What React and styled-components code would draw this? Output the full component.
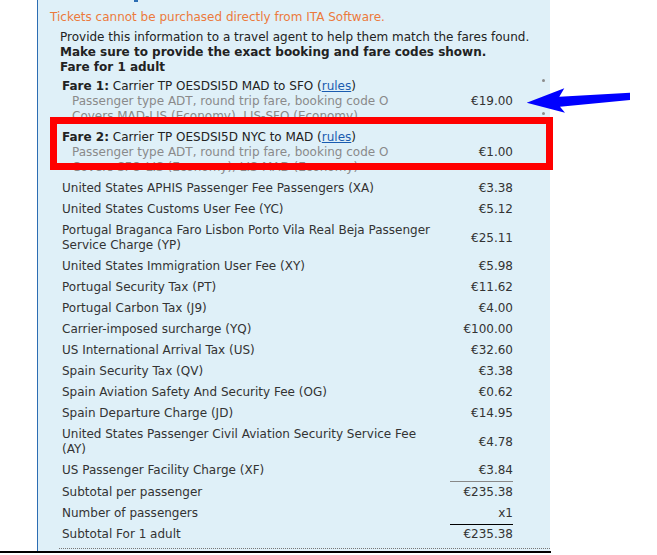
import React from "react";
import styled, { createGlobalStyle } from "styled-components";

const Global = createGlobalStyle`
  html, body { margin: 0; padding: 0; background: #fff; }
  body { font-family: "DejaVu Sans", Verdana, sans-serif; font-size: 12px; color: #333; }
`;

const Page = styled.div`
  position: relative;
  width: 657px;
  height: 555px;
  overflow: hidden;
  display: grid;
  grid-template-rows: 551px 2px 2px;
`;

const Panel = styled.div`
  margin-left: 37px;
  width: 513px;
  min-height: 0;
  box-sizing: border-box;
  background: #dff0f8;
  border-left: 1px solid #2c6db3;
  display: flex;
  flex-direction: column;
  overflow: hidden;
`;

const TopStrip = styled.div`
  height: 2px;
  flex: none;
  padding-left: 96px;
  display: flex;
`;

const Descender = styled.span`
  width: 4px;
  height: 2px;
  background: #2c6db3;
`;

const Warning = styled.div`
  margin-top: 8px;
  padding-left: 12px;
  line-height: 15px;
  color: #ec7a3c;
`;

const Info = styled.div`
  margin-top: 5px;
  padding-left: 22px;
  line-height: 15px;
  color: #222;
  white-space: nowrap;
`;

const Strong = styled.div`
  font-weight: bold;
  color: #222;
`;

const Table = styled.div`
  margin-top: 1px;
  padding-left: 24px;
  padding-right: 37px;
  display: flex;
  flex-direction: column;
  flex: none;
`;

const Row = styled.div`
  display: flex;
  align-items: center;
  padding: 3px 0;
  line-height: 15px;
  color: #333;
`;

const Label = styled.div`
  flex: 1;
  padding-right: 16px;
`;

const Amount = styled.div`
  width: 63px;
  text-align: right;
  align-self: stretch;
  display: flex;
  align-items: center;
  justify-content: flex-end;
  margin: ${(p) => (p.$rule ? "-3px 0" : "0")};
  padding: ${(p) => (p.$rule === "gray" ? "3px 0" : p.$rule === "black" ? "2px 0 3px" : "0")};
  border-top: ${(p) =>
    p.$rule === "gray" ? "1px solid #888" : p.$rule === "black" ? "1px solid #000" : "none"};
`;

const FareTitle = styled.div`
  color: #222;
  white-space: nowrap;
  b { font-weight: bold; }
`;

const RulesLink = styled.a`
  color: #1a5cb0;
  text-decoration: underline;
`;

const FareDetail = styled.div`
  padding-left: 10px;
  color: #8a8a8a;
  white-space: nowrap;
`;

const Dotted = styled.div`
  flex: none;
  margin-top: 3px;
  margin-left: 21px;
  border-top: 1px dotted #777;
`;

const BottomRule = styled.div`
  width: 551px;
  background: #000;
`;

const RedBox = styled.div`
  position: absolute;
  left: 50px;
  top: 117px;
  width: 489px;
  height: 39px;
  border: 7px solid #ff0000;
`;

const Dot = styled.div`
  position: absolute;
  left: 542px;
  top: ${(p) => p.$top}px;
  width: 3px;
  height: 3px;
  border-radius: 50%;
  background: #8c8c8c;
`;

const Arrow = styled.svg`
  position: absolute;
  left: 520px;
  top: 80px;
`;

const taxes = [
  ["United States APHIS Passenger Fee Passengers (XA)", "€3.38"],
  ["United States Customs User Fee (YC)", "€5.12"],
  ["Portugal Braganca Faro Lisbon Porto Vila Real Beja Passenger Service Charge (YP)", "€25.11"],
  ["United States Immigration User Fee (XY)", "€5.98"],
  ["Portugal Security Tax (PT)", "€11.62"],
  ["Portugal Carbon Tax (J9)", "€4.00"],
  ["Carrier-imposed surcharge (YQ)", "€100.00"],
  ["US International Arrival Tax (US)", "€32.60"],
  ["Spain Security Tax (QV)", "€3.38"],
  ["Spain Aviation Safety And Security Fee (OG)", "€0.62"],
  ["Spain Departure Charge (JD)", "€14.95"],
  ["United States Passenger Civil Aviation Security Service Fee (AY)", "€4.78"],
  ["US Passenger Facility Charge (XF)", "€3.84"],
];

const fares = [
  {
    n: 1,
    route: "MAD to SFO",
    covers: "Covers MAD-LIS (Economy), LIS-SFO (Economy)",
    amount: "€19.00",
  },
  {
    n: 2,
    route: "NYC to MAD",
    covers: "Covers SFO-LIS (Economy), LIS-MAD (Economy)",
    amount: "€1.00",
  },
];

export default function App() {
  return (
    <>
      <Global />
      <Page>
        <Panel>
          <TopStrip>
            <Descender />
          </TopStrip>
          <Warning>Tickets cannot be purchased directly from ITA Software.</Warning>
          <Info>
            <div>Provide this information to a travel agent to help them match the fares found.</div>
            <Strong>Make sure to provide the exact booking and fare codes shown.</Strong>
            <Strong>Fare for 1 adult</Strong>
          </Info>
          <Table>
            {fares.map((f) => (
              <Row key={f.n}>
                <Label>
                  <FareTitle>
                    <b>Fare {f.n}:</b> Carrier TP OESDSI5D {f.route} (<RulesLink>rules</RulesLink>)
                  </FareTitle>
                  <FareDetail>Passenger type ADT, round trip fare, booking code O</FareDetail>
                  <FareDetail>{f.covers}</FareDetail>
                </Label>
                <Amount>{f.amount}</Amount>
              </Row>
            ))}
            {taxes.map(([l, a]) => (
              <Row key={l}>
                <Label>{l}</Label>
                <Amount>{a}</Amount>
              </Row>
            ))}
            <Row>
              <Label>Subtotal per passenger</Label>
              <Amount $rule="gray">€235.38</Amount>
            </Row>
            <Row>
              <Label>Number of passengers</Label>
              <Amount>x1</Amount>
            </Row>
            <Row>
              <Label>Subtotal For 1 adult</Label>
              <Amount $rule="black">€235.38</Amount>
            </Row>
          </Table>
          <Dotted />
        </Panel>
        <BottomRule />
        <RedBox />
        <Dot $top={79} />
        <Dot $top={112} />
        <Arrow width="120" height="40" viewBox="520 80 120 40">
          <polygon
            points="526.7,102.7 564.3,88.3 559.3,96.7 630,92.7 630,100 560,106.7 565,112.7"
            fill="#0000ff"
          />
        </Arrow>
      </Page>
    </>
  );
}
